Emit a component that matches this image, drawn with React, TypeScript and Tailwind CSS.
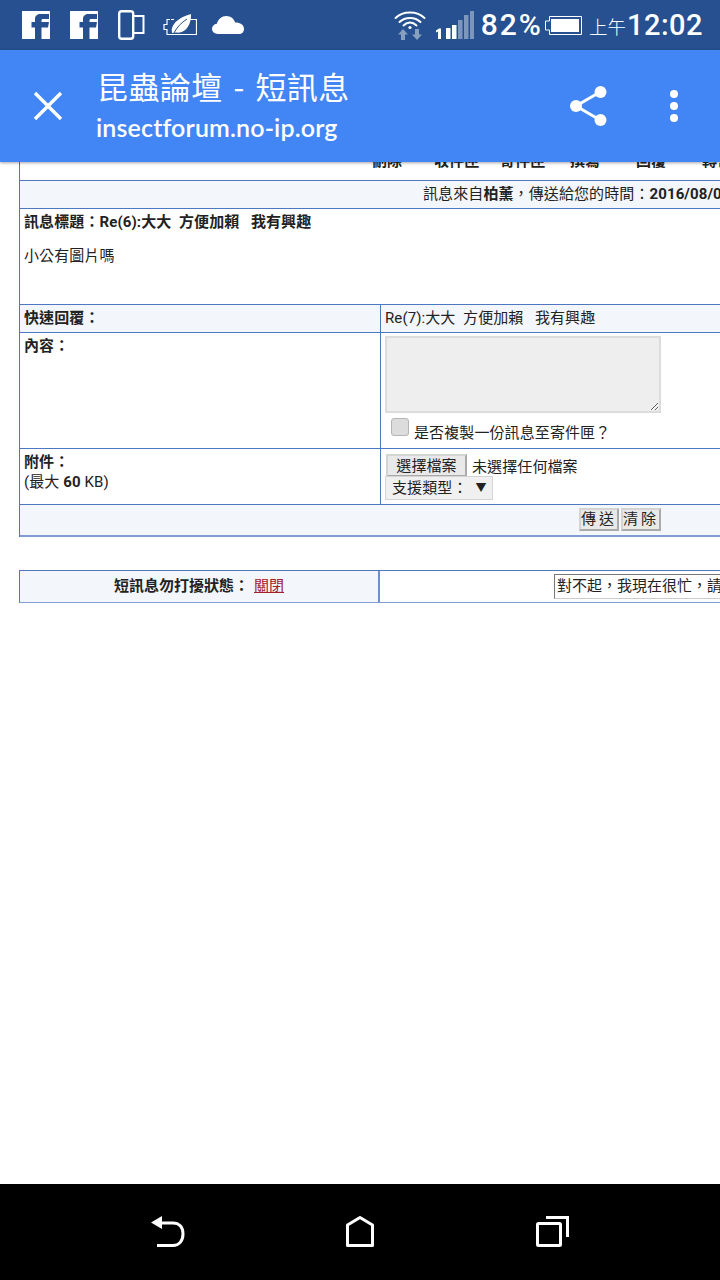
import React from 'react';

const CJK = 'Roboto, "Noto Sans CJK TC", sans-serif';

function FacebookIcon() {
  return (
    <svg width="28" height="28" viewBox="0 0 28 28" className="shrink-0">
      <path fill="#fff" fillRule="evenodd" d="M0 0H28V28H0ZM13 28V16.5H9.5V11H13V8C13 4.5 15.5 3 18.5 3H27V8H21.5C20 8 19.5 8.5 19.5 9.5V11H27L26 16.5H19.5V28Z" />
    </svg>
  );
}

function StatusLeft() {
  return (
    <div className="flex items-center">
      <div className="ml-[22px]"><FacebookIcon /></div>
      <div className="ml-[20px]"><FacebookIcon /></div>
      <svg width="27" height="30" viewBox="0 0 27 30" className="ml-[20px]" fill="none" stroke="#fff">
        <rect x="1.2" y="1.2" width="14" height="27.5" rx="2.5" strokeWidth="2.4" />
        <path d="M15 6H25.5V23H15" strokeWidth="2" />
      </svg>
      <svg width="34" height="22" viewBox="0 0 34 22" className="ml-[18px]" fill="none" stroke="#fff">
        <path d="M8 5.500H11M27 5.500H33.500V20.500H4V15.500H1V10.500H4V5.500H7" strokeWidth="1.2" />
        <path d="M9 19C7 11 15 3.500 28 0C28.500 10 23 20 13 18.500Z" fill="#fff" stroke="none" />
        <path d="M11 19C14 13 18 9 24 5" stroke="#26508f" strokeWidth="1" />
      </svg>
      <svg width="32" height="18" viewBox="0 0 32 18" className="ml-[15px]">
        <path fill="#fff" d="M6 18C2.500 18 0 15.800 0 12.800C0 10.200 2 8.200 4.800 7.800C6 3.200 9.800 0 14.200 0C18.600 0 22 2.800 23.200 6.600C28.500 6.600 32 9 32 13C32 16 29.800 18 27 18Z" />
      </svg>
    </div>
  );
}

function StatusRight() {
  return (
    <div className="flex items-center text-white">
      <svg width="32" height="30" viewBox="0 0 32 30" fill="none" stroke="#fff" strokeWidth="2" strokeLinecap="round">
        <path d="M1.500 8C9 .5 23 .5 30.500 8" />
        <path d="M5.500 12C11 6.500 21 6.500 26.500 12" />
        <path d="M9.500 15.500C13.500 11.500 18.500 11.500 22.500 15.500" />
        <circle cx="16" cy="17.500" r="1.600" fill="#fff" stroke="none" />
        <path fill="#fff" fillOpacity="0.45" stroke="none" d="M4 24.500L9 19L14 24.500H11V30H7V24.500ZM18 24.500H21V19H25V24.500H28L23 30Z" />
      </svg>
      <svg width="38" height="28" viewBox="0 0 38 28" className="ml-[10px]" fill="#fff">
        <path d="M0 19.500L3 17.500H5V28H2V20.500L0 21.500Z" />
        <rect x="10" y="17" width="4.500" height="11" />
        <rect x="16" y="14" width="4.500" height="14" />
        <rect x="22" y="9" width="4.500" height="19" fillOpacity="0.4" />
        <rect x="28" y="4" width="4.500" height="24" fillOpacity="0.4" />
        <rect x="34" y="0" width="4" height="28" fillOpacity="0.4" />
      </svg>
      <span className="ml-[7px] text-[30px] leading-none font-medium tracking-[2px] [font-family:Roboto,sans-serif]">82%</span>
      <svg width="37" height="19" viewBox="0 0 37 19" className="ml-[2px]" fill="none" stroke="#fff">
        <path d="M4.500 .5H36.500V18.500H4.500V14H.5V5H4.500Z" strokeWidth="1" />
        <rect x="6" y="3" width="28" height="13" fill="#fff" stroke="none" />
      </svg>
      <span className="ml-[7px] mt-[2px] text-[18.500px] leading-none font-light" style={{ fontFamily: '"Noto Sans CJK TC", sans-serif' }}>上午</span>
      <span className="ml-[1px] mr-[17px] text-[29px] leading-none font-medium tracking-[0.5px] [font-family:Roboto,sans-serif]">12:02</span>
    </div>
  );
}

function Toolbar() {
  return (
    <div className="relative z-10 flex h-[112px] shrink-0 items-center bg-[#4285f4] text-white shadow-[0_1px_3px_rgba(0,0,0,0.35)]">
      <svg width="30" height="30" viewBox="0 0 30 30" className="ml-[33px] shrink-0" stroke="#fff" strokeWidth="3.400">
        <path d="M2 2L28 28M28 2L2 28" />
      </svg>
      <div className="ml-[33px] flex flex-col">
        <div className="ml-[1px] -mt-[4px] text-[31px] leading-[40px] tracking-[0.4px] [word-spacing:3.500px]" style={{ fontFamily: '"Noto Sans CJK TC", sans-serif' }}>昆蟲論壇 - 短訊息</div>
        <div className="mt-[6px] text-[25px] leading-[30px] font-semibold tracking-[0.15px] [font-family:Lato,sans-serif]">insectforum.no-ip.org</div>
      </div>
      <svg width="38" height="42" viewBox="0 0 38 42" className="ml-auto" fill="#fff" stroke="#fff" strokeWidth="3">
        <path d="M30 7L6 21L30 35" fill="none" />
        <circle cx="30.500" cy="7" r="6" stroke="none" />
        <circle cx="6" cy="21" r="6" stroke="none" />
        <circle cx="30.500" cy="35" r="6" stroke="none" />
      </svg>
      <svg width="8" height="32" viewBox="0 0 8 32" className="ml-[62px] mr-[42px]" fill="#fff">
        <circle cx="4" cy="4" r="4" />
        <circle cx="4" cy="16" r="4" />
        <circle cx="4" cy="28" r="4" />
      </svg>
    </div>
  );
}

function GreyButton({ children, className }: { children: React.ReactNode; className: string }) {
  return (
    <div className={`flex items-center justify-center border-2 border-[#d4d4d4] border-b-[#aaa] border-r-[#aaa] bg-[#e9e9e9] text-[15px] leading-none text-[#222] ${className}`}>
      {children}
    </div>
  );
}

function MessageForm() {
  return (
    <div className="ml-[19px] w-[900px] border-l border-[#4d78c0] text-[15px] leading-[20px] tracking-[0.1px] text-[#222]">
      {/* nav row, its top is hidden under the toolbar */}
      <div className="flex h-[19px] items-end overflow-hidden whitespace-nowrap border-b border-[#4d78c0] pb-[9px] pl-[352px] font-bold">
        <span className="w-[62px]">刪除</span>
        <span className="w-[66px]">收件匣</span>
        <span className="w-[70px]">寄件匣</span>
        <span className="w-[66px]">撰寫</span>
        <span className="w-[66px]">回覆</span>
        <span>轉寄</span>
      </div>

      <div className="flex h-[28px] items-center whitespace-nowrap border-b border-[#4d78c0] bg-[#f3f6fb] pb-px pl-[403px]">
        <span>訊息來自<b>柏薰</b>，傳送給您的時間：<b>2016/08/0</b></span>
      </div>

      <div className="h-[96px] border-b border-[#4d78c0] pl-[4px] pt-[3px]">
        <p className="font-bold whitespace-pre">訊息標題：Re(6):大大  方便加賴   我有興趣</p>
        <p className="mt-[14px]">小公有圖片嗎</p>
      </div>

      <div className="flex h-[28px] border-b border-[#4d78c0] bg-[#f3f6fb]">
        <div className="flex w-[361px] items-center border-r border-[#4d78c0] pb-px pl-[4px] font-bold">快速回覆：</div>
        <div className="flex items-center whitespace-pre pb-px pl-[4px]">Re(7):大大  方便加賴   我有興趣</div>
      </div>

      <div className="flex h-[116px] border-b border-[#4d78c0]">
        <div className="w-[361px] border-r border-[#4d78c0] pl-[4px] pt-[3px] font-bold">內容：</div>
        <div className="flex flex-col pl-[4px] pt-[3px]">
          <textarea readOnly className="block h-[77px] w-[276px] resize border-2 border-[#dcdcdc] bg-[#eeeeee]" />
          <div className="mt-[5px] flex items-start pl-[6px]">
            <div className="h-[18px] w-[18px] rounded-[3px] border border-[#b5b5b5] bg-[#dcdcdc]" />
            <span className="ml-[5px] mt-[5px]">是否複製一份訊息至寄件匣？</span>
          </div>
        </div>
      </div>

      <div className="flex h-[56px] border-b border-[#4d78c0]">
        <div className="w-[361px] border-r border-[#4d78c0] pl-[4px] pt-[3px]">
          <p className="font-bold">附件：</p>
          <p>(最大 <b>60</b> KB)</p>
        </div>
        <div className="pl-[4px] pt-[5px]">
          <div className="flex items-center">
            <GreyButton className="ml-[1px] h-[23px] w-[81px] pt-[2px]">選擇檔案</GreyButton>
            <span className="ml-[5px] mt-[2px]">未選擇任何檔案</span>
          </div>
          <div className="relative -mt-px flex h-[24px] w-[108px] items-center border border-[#d4d4d4] bg-[#f0f0f0] pl-[6px]">
            支援類型：<span className="ml-[8px] text-[11px] leading-none">▼</span>
          </div>
        </div>
      </div>

      <div className="flex h-[32px] items-center border-b-2 border-b-[#7f9dd2] bg-[#f3f6fb] pb-[1px] pl-[559px]">
        <GreyButton className="h-[23px] w-[40px] tracking-[3px]">傳送</GreyButton>
        <GreyButton className="ml-[2px] h-[23px] w-[40px] tracking-[3px]">清除</GreyButton>
      </div>
    </div>
  );
}

function BusyStatus() {
  return (
    <div className="ml-[19px] mt-[33px] flex h-[33px] w-[900px] border-y border-l border-[#4d78c0] border-b-[#7f9dd2] text-[15px] leading-[20px] text-[#222]">
      <div className="flex w-[360px] items-center justify-center border-r-2 border-[#6d90cb] bg-[#f3f6fb] pb-[2px] font-bold">
        短訊息勿打擾狀態：
        <a href="#" className="ml-[5px] font-normal text-[#a5202a] underline">關閉</a>
      </div>
      <div className="flex items-center pb-px pl-[174px]">
        <div className="flex h-[25px] w-[300px] items-center whitespace-nowrap border border-[#777] border-b-[#ccc] border-r-[#ccc] pl-[2px]">對不起，我現在很忙，請稍後再聯絡。</div>
      </div>
    </div>
  );
}

function NavBar() {
  return (
    <div className="flex h-[96px] shrink-0 items-center justify-center bg-black pb-[2px]">
      <svg width="36" height="32" viewBox="0 0 36 32" fill="none" stroke="#fff" strokeWidth="3" className="mr-[159px]">
        <path d="M8 32H24C30 32 34 27.500 34 20.500C34 13.500 30 9.500 24 9.500H10" transform="translate(-2 -1.500)" />
        <path d="M0 7.500L11 1V14Z" fill="#fff" stroke="none" />
      </svg>
      <svg width="28" height="32" viewBox="0 0 28 32" fill="none" stroke="#fff" strokeWidth="3" strokeLinejoin="round">
        <path d="M1.500 30.500V10L14 2.500L26.500 10V30.500Z" />
      </svg>
      <svg width="33" height="31" viewBox="0 0 33 31" fill="none" stroke="#fff" strokeWidth="3" className="ml-[162px]">
        <rect x="1.500" y="7.500" width="23" height="22" rx="1" />
        <path d="M10 1.500H31.500V21" />
      </svg>
    </div>
  );
}

export default function App() {
  return (
    <div lang="zh-TW" className="flex h-[1280px] w-[720px] flex-col overflow-hidden bg-white" style={{ fontFamily: CJK }}>
      <div className="flex h-[50px] shrink-0 items-center justify-between bg-[#26508f]">
        <StatusLeft />
        <StatusRight />
      </div>
      <Toolbar />
      <div className="min-h-0 flex-1 overflow-hidden bg-white">
        <MessageForm />
        <BusyStatus />
      </div>
      <NavBar />
    </div>
  );
}
